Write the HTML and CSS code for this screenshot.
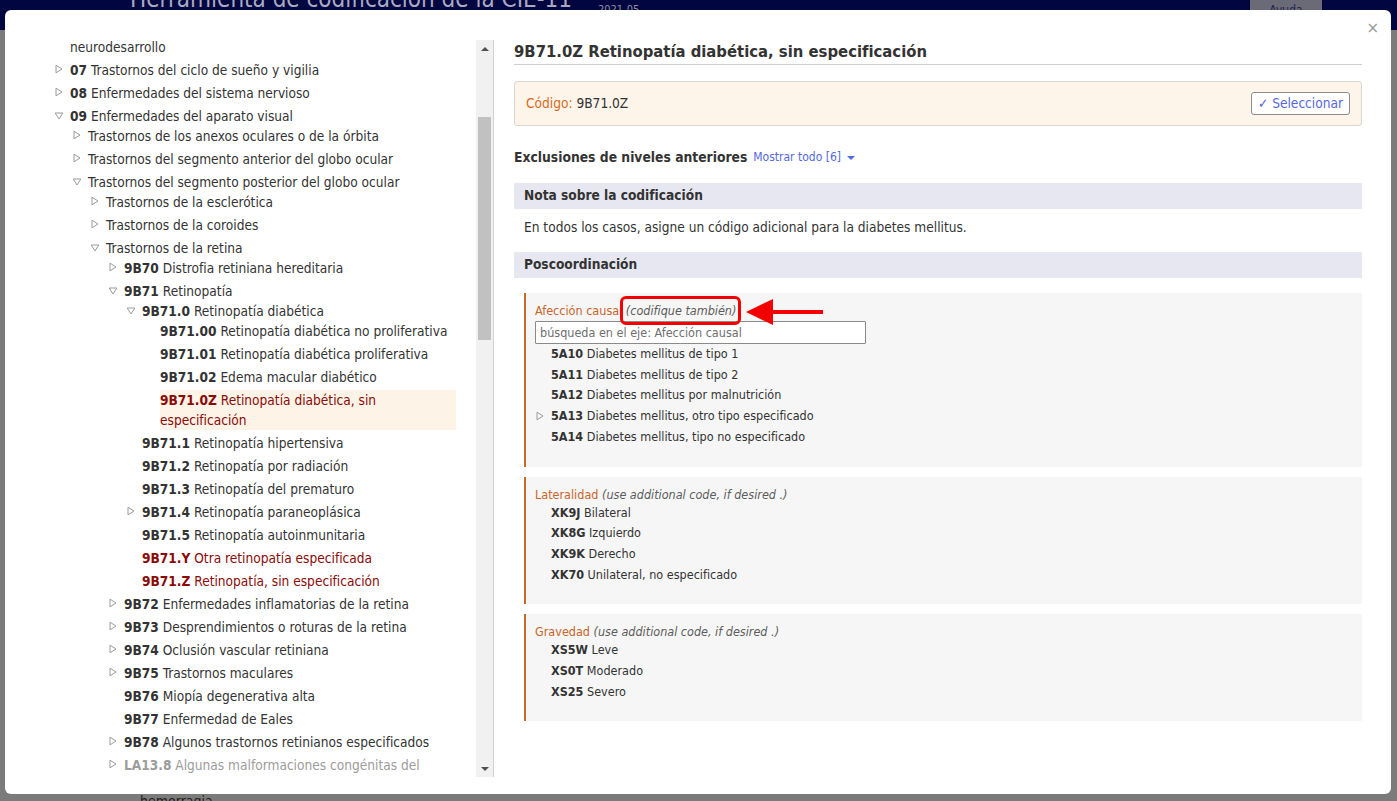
FILE: index.html
```html
<!DOCTYPE html>
<html lang="es">
<head>
<meta charset="utf-8">
<title>Herramienta de codificación de la CIE-11</title>
<link rel="stylesheet" href="styles.css">
</head>
<body>
<svg class="defs" width="0" height="0" aria-hidden="true">
  <symbol id="tri-r" viewBox="0 0 8 10"><polygon points="1,1.2 7,5 1,8.8" fill="none" stroke="#9a9a9a" stroke-width="1"/></symbol>
  <symbol id="tri-d" viewBox="0 0 10 8"><polygon points="1.2,1 8.8,1 5,7" fill="none" stroke="#9a9a9a" stroke-width="1"/></symbol>
</svg>

<div class="page">
  <header class="topbar">
    <div class="brand">Herramienta de codificación de la CIE-11</div>
    <div class="release">2021-05</div>
    <div class="help">Ayuda</div>
  </header>
  <div class="page-rest"><span class="bg-word">hemorragia</span></div>
</div>

<div class="modal">
  <button class="close" type="button">×</button>
  <div class="modal-body">
    <aside class="tree-col">
      <div class="tree-pane">
        <ul class="tree">
          <li><div class="row"><span class="tg"></span><span class="txt">neurodesarrollo</span></div></li>
          <li><div class="row"><span class="tg"><svg class="tri r"><use href="#tri-r"/></svg></span><span class="txt"><b>07</b> Trastornos del ciclo de sueño y vigilia</span></div></li>
          <li><div class="row"><span class="tg"><svg class="tri r"><use href="#tri-r"/></svg></span><span class="txt"><b>08</b> Enfermedades del sistema nervioso</span></div></li>
          <li><div class="row"><span class="tg"><svg class="tri d"><use href="#tri-d"/></svg></span><span class="txt"><b>09</b> Enfermedades del aparato visual</span></div>
            <ul>
              <li><div class="row"><span class="tg"><svg class="tri r"><use href="#tri-r"/></svg></span><span class="txt">Trastornos de los anexos oculares o de la órbita</span></div></li>
              <li><div class="row"><span class="tg"><svg class="tri r"><use href="#tri-r"/></svg></span><span class="txt">Trastornos del segmento anterior del globo ocular</span></div></li>
              <li><div class="row"><span class="tg"><svg class="tri d"><use href="#tri-d"/></svg></span><span class="txt">Trastornos del segmento posterior del globo ocular</span></div>
                <ul>
                  <li><div class="row"><span class="tg"><svg class="tri r"><use href="#tri-r"/></svg></span><span class="txt">Trastornos de la esclerótica</span></div></li>
                  <li><div class="row"><span class="tg"><svg class="tri r"><use href="#tri-r"/></svg></span><span class="txt">Trastornos de la coroides</span></div></li>
                  <li><div class="row"><span class="tg"><svg class="tri d"><use href="#tri-d"/></svg></span><span class="txt">Trastornos de la retina</span></div>
                    <ul>
                      <li><div class="row"><span class="tg"><svg class="tri r"><use href="#tri-r"/></svg></span><span class="txt"><b>9B70</b> Distrofia retiniana hereditaria</span></div></li>
                      <li><div class="row"><span class="tg"><svg class="tri d"><use href="#tri-d"/></svg></span><span class="txt"><b>9B71</b> Retinopatía</span></div>
                        <ul>
                          <li><div class="row"><span class="tg"><svg class="tri d"><use href="#tri-d"/></svg></span><span class="txt"><b>9B71.0</b> Retinopatía diabética</span></div>
                            <ul>
                              <li><div class="row"><span class="tg"></span><span class="txt"><b>9B71.00</b> Retinopatía diabética no proliferativa</span></div></li>
                              <li><div class="row"><span class="tg"></span><span class="txt"><b>9B71.01</b> Retinopatía diabética proliferativa</span></div></li>
                              <li><div class="row"><span class="tg"></span><span class="txt"><b>9B71.02</b> Edema macular diabético</span></div></li>
                              <li><div class="row"><span class="tg"></span><span class="txt sel"><b>9B71.0Z</b> Retinopatía diabética, sin especificación</span></div></li>
                            </ul>
                          </li>
                          <li><div class="row"><span class="tg"></span><span class="txt"><b>9B71.1</b> Retinopatía hipertensiva</span></div></li>
                          <li><div class="row"><span class="tg"></span><span class="txt"><b>9B71.2</b> Retinopatía por radiación</span></div></li>
                          <li><div class="row"><span class="tg"></span><span class="txt"><b>9B71.3</b> Retinopatía del prematuro</span></div></li>
                          <li><div class="row"><span class="tg"><svg class="tri r"><use href="#tri-r"/></svg></span><span class="txt"><b>9B71.4</b> Retinopatía paraneoplásica</span></div></li>
                          <li><div class="row"><span class="tg"></span><span class="txt"><b>9B71.5</b> Retinopatía autoinmunitaria</span></div></li>
                          <li><div class="row"><span class="tg"></span><span class="txt res"><b>9B71.Y</b> Otra retinopatía especificada</span></div></li>
                          <li><div class="row"><span class="tg"></span><span class="txt res"><b>9B71.Z</b> Retinopatía, sin especificación</span></div></li>
                        </ul>
                      </li>
                      <li><div class="row"><span class="tg"><svg class="tri r"><use href="#tri-r"/></svg></span><span class="txt"><b>9B72</b> Enfermedades inflamatorias de la retina</span></div></li>
                      <li><div class="row"><span class="tg"><svg class="tri r"><use href="#tri-r"/></svg></span><span class="txt"><b>9B73</b> Desprendimientos o roturas de la retina</span></div></li>
                      <li><div class="row"><span class="tg"><svg class="tri r"><use href="#tri-r"/></svg></span><span class="txt"><b>9B74</b> Oclusión vascular retiniana</span></div></li>
                      <li><div class="row"><span class="tg"><svg class="tri r"><use href="#tri-r"/></svg></span><span class="txt"><b>9B75</b> Trastornos maculares</span></div></li>
                      <li><div class="row"><span class="tg"></span><span class="txt"><b>9B76</b> Miopía degenerativa alta</span></div></li>
                      <li><div class="row"><span class="tg"></span><span class="txt"><b>9B77</b> Enfermedad de Eales</span></div></li>
                      <li><div class="row"><span class="tg"><svg class="tri r"><use href="#tri-r"/></svg></span><span class="txt"><b>9B78</b> Algunos trastornos retinianos especificados</span></div></li>
                      <li><div class="row"><span class="tg"><svg class="tri r"><use href="#tri-r"/></svg></span><span class="txt foreign"><b>LA13.8</b> Algunas malformaciones congénitas del segmento posterior del ojo</span></div></li>
                    </ul>
                  </li>
                </ul>
              </li>
            </ul>
          </li>
        </ul>
      </div>
      <div class="vscroll">
        <div class="sb-btn"><span class="arr up"></span></div>
        <div class="sb-track"><div class="thumb"></div></div>
        <div class="sb-btn"><span class="arr down"></span></div>
      </div>
    </aside>

    <main class="detail">
      <h1 class="title">9B71.0Z Retinopatía diabética, sin especificación</h1>

      <div class="codebox">
        <div class="code"><span class="code-lbl">Código:</span> 9B71.0Z</div>
        <button class="select" type="button">✓ Seleccionar</button>
      </div>

      <div class="excl"><b>Exclusiones de niveles anteriores</b> <span class="more">Mostrar todo [6]</span><span class="caret"></span></div>

      <h2 class="band">Nota sobre la codificación</h2>
      <p class="note">En todos los casos, asigne un código adicional para la diabetes mellitus.</p>

      <h2 class="band">Poscoordinación</h2>

      <div class="groups">
        <section class="pc">
          <div class="pc-label"><span class="axis">Afección causal</span> <span class="mark"><em>(codifique también)</em><svg class="arrow" width="80" height="28" viewBox="0 0 80 28"><polygon points="0,14 27,1 27,27" fill="#f40000"/><rect x="26" y="12" width="51" height="4" fill="#f40000"/></svg></span></div>
          <input class="pc-search" type="text" placeholder="búsqueda en el eje: Afección causal">
          <ul class="pc-list">
            <li><span class="tg2"></span><span><b>5A10</b> Diabetes mellitus de tipo 1</span></li>
            <li><span class="tg2"></span><span><b>5A11</b> Diabetes mellitus de tipo 2</span></li>
            <li><span class="tg2"></span><span><b>5A12</b> Diabetes mellitus por malnutrición</span></li>
            <li><span class="tg2"><svg class="tri r"><use href="#tri-r"/></svg></span><span><b>5A13</b> Diabetes mellitus, otro tipo especificado</span></li>
            <li><span class="tg2"></span><span><b>5A14</b> Diabetes mellitus, tipo no especificado</span></li>
          </ul>
        </section>

        <section class="pc">
          <div class="pc-label"><span class="axis">Lateralidad</span> <em>(use additional code, if desired .)</em></div>
          <ul class="pc-list">
            <li><span class="tg2"></span><span><b>XK9J</b> Bilateral</span></li>
            <li><span class="tg2"></span><span><b>XK8G</b> Izquierdo</span></li>
            <li><span class="tg2"></span><span><b>XK9K</b> Derecho</span></li>
            <li><span class="tg2"></span><span><b>XK70</b> Unilateral, no especificado</span></li>
          </ul>
        </section>

        <section class="pc">
          <div class="pc-label"><span class="axis">Gravedad</span> <em>(use additional code, if desired .)</em></div>
          <ul class="pc-list">
            <li><span class="tg2"></span><span><b>XS5W</b> Leve</span></li>
            <li><span class="tg2"></span><span><b>XS0T</b> Moderado</span></li>
            <li><span class="tg2"></span><span><b>XS25</b> Severo</span></li>
          </ul>
        </section>
      </div>
    </main>
  </div>
</div>
</body>
</html>
```

FILE: styles.css
```css
* { box-sizing: border-box; }

html, body {
  margin: 0;
  padding: 0;
  height: 100%;
}

body {
  font-family: "DejaVu Sans Condensed", "DejaVu Sans", sans-serif;
  font-stretch: semi-condensed;
  font-size: 13.6px;
  color: #333;
  background: #7b7b7b;
  overflow: hidden;
}

.defs {
  position: absolute;
  width: 0;
  height: 0;
  overflow: hidden;
}

/* ---------- background page (dimmed by overlay) ---------- */
.page {
  height: 801px;
  display: flex;
  flex-direction: column;
}

.topbar {
  height: 30px;
  background: #010540;
  display: flex;
  align-items: flex-start;
  padding-left: 130px;
  overflow: hidden;
  flex: none;
}

.brand {
  font-size: 24px;
  line-height: 24px;
  margin-top: -13px;
  color: #a9aac2;
  white-space: nowrap;
}

.release {
  margin-left: 26px;
  font-size: 11px;
  line-height: 12px;
  margin-top: 4px;
  color: #8d8ea6;
}

.help {
  margin-left: auto;
  margin-right: 75px;
  width: 72px;
  height: 30px;
  background: #6b6b78;
  color: #1f2550;
  font-size: 12px;
  text-align: center;
  line-height: 12px;
  padding-top: 4px;
}

.page-rest {
  flex: 1;
  display: flex;
  align-items: flex-end;
  padding-left: 140px;
}

.bg-word {
  font-size: 14px;
  line-height: 12px;
  height: 6px;
  overflow: hidden;
  color: #1e1e1e;
}

/* ---------- modal ---------- */
.modal {
  position: absolute;
  left: 5px;
  top: 10px;
  width: 1386px;
  height: 784px;
  background: #fff;
  border-radius: 6px;
}

.close {
  position: absolute;
  top: 9px;
  right: 12px;
  border: 0;
  background: none;
  padding: 0;
  font-family: "DejaVu Sans", sans-serif;
  font-size: 15px;
  line-height: 18px;
  color: #9a9a9a;
}

.modal-body {
  display: flex;
  padding-top: 30px;
  height: 100%;
}

/* ---------- left tree ---------- */
.tree-col {
  width: 489px;
  height: 737px;
  flex: none;
  display: flex;
  padding-left: 45px;
  border-right: 1px solid #d3d3d3;
}

.tree-pane {
  width: 426px;
  height: 737px;
  overflow: hidden;
  padding-right: 20px;
}

.tree, .tree ul {
  list-style: none;
  margin: 0;
  padding: 0;
}

.tree {
  margin-top: -3px;
  padding-left: 5px;
}

.tree ul {
  padding-left: 18px;
}

.tree li + li {
  margin-top: 3px;
}

.row {
  display: flex;
  line-height: 20px;
}

.tg {
  width: 15px;
  flex: none;
  position: relative;
}

.tri {
  display: block;
}

.tri.r {
  width: 8px;
  height: 10px;
  margin-top: 4px;
}

.tri.d {
  width: 10px;
  height: 8px;
  margin-top: 6px;
  margin-left: -1px;
}

.txt {
  flex: 1;
  min-width: 0;
}

.txt b {
  color: #333;
}

.txt.sel {
  background: #fdf3e6;
  color: #8b0a0a;
}

.txt.sel b,
.txt.res b {
  color: #8b0a0a;
}

.txt.res {
  color: #8b0a0a;
}

.txt.foreign,
.txt.foreign b {
  color: #9c9c9c;
}

/* fake classic scrollbar */
.vscroll {
  width: 17px;
  height: 737px;
  flex: none;
  background: #f1f1f1;
  display: flex;
  flex-direction: column;
}

.sb-btn {
  height: 17px;
  flex: none;
  display: flex;
  align-items: center;
  justify-content: center;
}

.arr {
  width: 0;
  height: 0;
  border-left: 4px solid transparent;
  border-right: 4px solid transparent;
}

.arr.up { border-bottom: 4px solid #505050; }
.arr.down { border-top: 4px solid #505050; }

.sb-track {
  flex: 1;
}

.thumb {
  margin: 60px 2px 0;
  height: 223px;
  background: #c1c1c1;
}

/* ---------- right detail ---------- */
.detail {
  flex: 1;
  min-width: 0;
  padding: 0 29px 0 20px;
}

.title {
  margin: 0;
  font-size: 16.5px;
  font-weight: bold;
  line-height: 24px;
  color: #333;
  border-bottom: 1px solid #cfcfcf;
}

.codebox {
  margin-top: 16px;
  background: #fdf5e9;
  border: 1px solid #d9d6d0;
  border-radius: 3px;
  padding: 10px 11px;
  display: flex;
  align-items: center;
  justify-content: space-between;
}

.code {
  line-height: 23px;
  color: #333;
}

.code-lbl {
  color: #d9691e;
}

.select {
  height: 23px;
  padding: 0 6px;
  background: #fff;
  border: 1px solid #8c8c8c;
  border-radius: 3px;
  font-family: inherit;
  font-stretch: inherit;
  font-size: 13.6px;
  color: #5569dd;
  line-height: 21px;
}

.excl {
  margin-top: 21px;
  line-height: 20px;
  display: flex;
  align-items: center;
}

.excl b {
  font-size: 13.75px;
}

.more {
  margin-left: 6px;
  font-size: 12px;
  color: #5468e0;
}

.caret {
  margin-left: 6px;
  width: 0;
  height: 0;
  border-left: 4px solid transparent;
  border-right: 4px solid transparent;
  border-top: 4px solid #5468e0;
  margin-top: 2px;
}

.band {
  margin: 16px 0 0;
  height: 26px;
  line-height: 25px;
  padding-left: 10px;
  background: #e6e7f0;
  font-size: 13.6px;
  font-weight: bold;
  color: #333;
}

.note {
  margin: 8px 0 0;
  padding-left: 10px;
  line-height: 20px;
}

.note + .band {
  margin-top: 15px;
}

.groups {
  margin-top: 15px;
  padding-left: 10px;
  display: flex;
  flex-direction: column;
  gap: 10px;
}

.pc {
  background: #f6f6f6;
  border-left: 2px solid #c96a2b;
  padding: 9px 10px 19px 9px;
  font-size: 12.5px;
}

.pc-label {
  line-height: 17px;
  white-space: nowrap;
}

.axis {
  color: #c8652a;
}

.pc-label em {
  color: #5c5c5c;
}

.mark {
  position: relative;
  display: inline-block;
}

.mark::before {
  content: "";
  position: absolute;
  left: -6px;
  right: -5px;
  top: -6px;
  bottom: -6px;
  border: 3.5px solid #f40000;
  border-radius: 6px;
}

.arrow {
  position: absolute;
  left: calc(100% + 10px);
  top: -4px;
}

.pc-search {
  display: block;
  margin-top: 2px;
  width: 331px;
  height: 23px;
  border: 1px solid #8a8a8a;
  border-radius: 1px;
  background: #fff;
  padding: 0 4px;
  font-family: inherit;
  font-stretch: inherit;
  font-size: 12.5px;
  color: #333;
}

.pc-search::placeholder {
  color: #6e6e6e;
}

.pc-list {
  list-style: none;
  margin: 0;
  padding: 0;
}

.pc-list li {
  display: flex;
  line-height: 20.7px;
}

.tg2 {
  width: 16px;
  flex: none;
}

.tg2 .tri.r {
  margin-top: 5px;
  margin-left: 1px;
}

.pc-list b {
  color: #333;
}
```
